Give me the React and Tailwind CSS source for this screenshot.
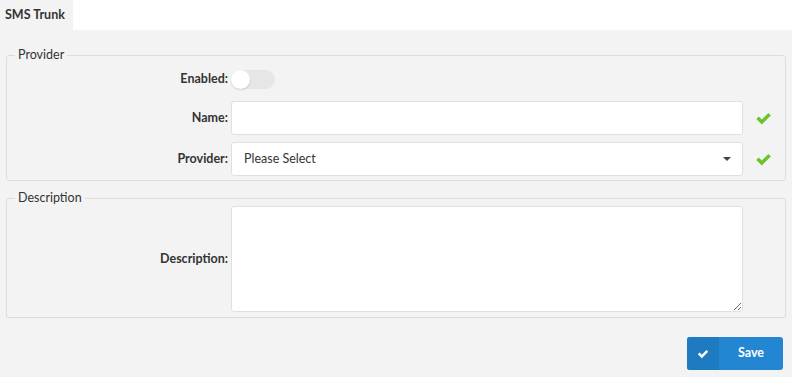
import React from "react";

const Check = ({ className = "" }) => (
  <svg viewBox="0 0 16 16" className={className} fill="currentColor">
    <path d="M1.2 8.4 L3.5 6.1 L6.4 9 L12.6 2.8 L14.9 5.1 L6.4 13.6 Z" />
  </svg>
);

const Row = ({ label, children, valid, className = "" }) => (
  <div className={`flex items-center ${className}`}>
    <label className="w-[224px] shrink-0 pr-[3px] text-right text-[12.5px] font-bold text-[#333]">
      {label}
    </label>
    <div className="w-[512px] shrink-0">{children}</div>
    <div className="flex w-[40px] justify-center">
      {valid && <Check className="h-[17px] w-[17px] text-[#6cc32a]" />}
    </div>
  </div>
);

export default function App() {
  return (
    <div className="min-h-[377px] bg-[#f3f3f3] font-['Lato','Liberation_Sans',sans-serif] text-[#333]">
      {/* tab bar */}
      <div className="flex h-[30px] bg-white">
        <div className="flex items-center bg-[#f3f3f3] px-[5px] pr-[8px] text-[12.5px] font-bold">
          SMS Trunk
        </div>
      </div>

      <div className="px-[6px] pt-[17px]">
        <fieldset className="rounded-[3px] border border-[#dcdcdc] px-0 pb-[4px] pt-[7px]">
          <legend className="ml-[8px] px-[3px] text-[12.5px] leading-[16px]">Provider</legend>
          <Row label="Enabled:">
            <div className="relative h-[19px] w-[44px] rounded-full bg-[#e6e6e6]">
              <div className="absolute left-0 top-0 h-[19px] w-[19px] rounded-full bg-white shadow-[0_1px_2px_rgba(0,0,0,0.15)]" />
            </div>
          </Row>
          <Row label="Name:" valid className="mt-[12px]">
            <input className="block h-[34px] w-full rounded-[3px] border border-[#e0e0e0] bg-white px-[12px] text-[12.5px] outline-none" />
          </Row>
          <Row label="Provider:" valid className="mt-[7px]">
            <div className="flex h-[34px] w-full items-center justify-between rounded-[3px] border border-[#e0e0e0] bg-white pl-[12px] pr-[11px] text-[12.5px]">
              <span>Please Select</span>
              <span className="h-0 w-0 border-x-[4px] border-t-[4px] border-x-transparent border-t-[#444]" />
            </div>
          </Row>
        </fieldset>

        <fieldset className="mt-[9px] rounded-[3px] border border-[#dcdcdc] px-0 pb-[5px] pt-0">
          <legend className="ml-[8px] px-[3px] text-[12.5px] leading-[16px]">Description</legend>
          <Row label="Description:">
            <textarea className="block h-[106px] w-full rounded-[3px] border border-[#e0e0e0] bg-white px-[12px] text-[12.5px] outline-none" />
          </Row>
        </fieldset>

        <div className="flex justify-end pr-[3px] pt-[19px]">
          <button className="flex h-[33px] w-[96px] overflow-hidden rounded-[3px] bg-[#2286d2] text-[12.5px] font-bold text-white">
            <span className="flex h-full w-[32px] items-center justify-center bg-[#1f7bc1]">
              <Check className="h-[12px] w-[12px]" />
            </span>
            <span className="flex flex-1 items-center justify-center">Save</span>
          </button>
        </div>
      </div>
    </div>
  );
}
